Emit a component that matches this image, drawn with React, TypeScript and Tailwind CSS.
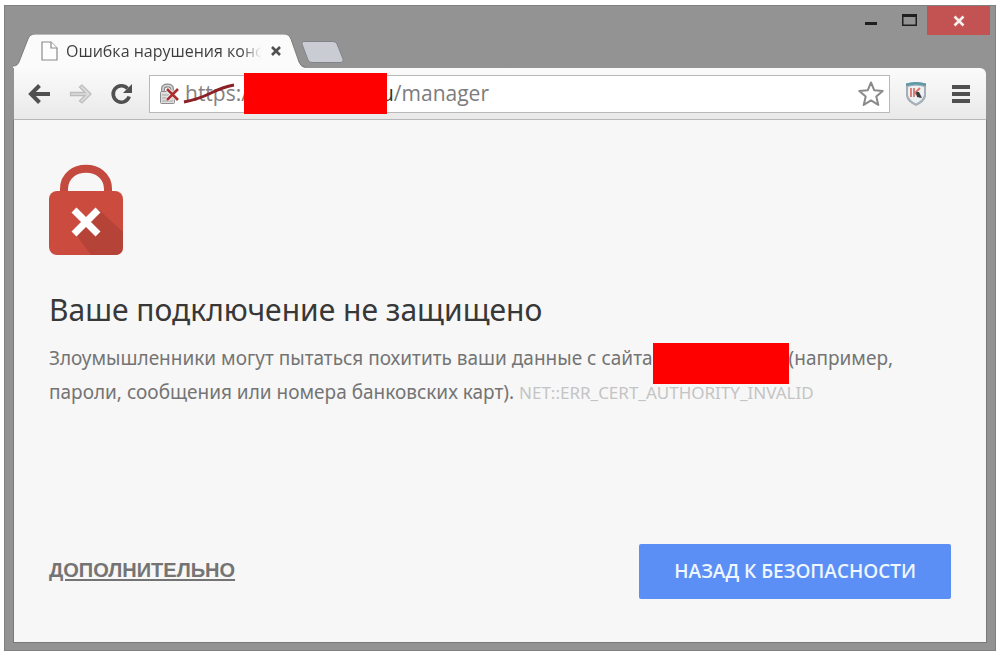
import React from 'react';

function PageIcon() {
  return (
    <svg className="shrink-0" width="17" height="20" viewBox="0 0 17 20" fill="#fdfdfd" stroke="#8c8c8c" strokeWidth="1.2">
      <path d="M1 1H10L16 7V19H1Z" />
      <path d="M10 1V7H16" />
    </svg>
  );
}

function Tab() {
  return (
    <div className="relative flex h-[34px] w-[292px] items-center pl-7">
      <svg className="absolute inset-0" width="292" height="34" viewBox="0 0 292 34" fill="none">
        <path d="M0 34V32C4 32 5 30 6 28L15 5Q17 0 22 0H271Q276 0 278 5L286 28Q288 33 292 34Z" fill="#fbfbfb" />
        <path d="M0 32C4 32 5 30 6 28L15 5Q17 0 22 0H271Q276 0 278 5L286 28Q288 33 292 33" stroke="#7d7d7d" />
      </svg>
      <div className="relative flex items-center">
        <PageIcon />
        <span className="ml-2 w-[195px] overflow-hidden whitespace-nowrap bg-linear-to-r from-[#3c3c3c] from-90% to-transparent bg-clip-text text-base text-transparent">
          Ошибка нарушения конф
        </span>
        <button type="button" aria-label="Закрыть вкладку" className="ml-[9px]">
          <svg width="12" height="12" viewBox="0 0 12 12" stroke="#505050" strokeWidth="2.6">
            <path d="M2 2L10 10M10 2L2 10" />
          </svg>
        </button>
      </div>
    </div>
  );
}

function TitleBar() {
  return (
    <header className="flex items-start justify-between">
      <div className="flex items-start pt-7 pl-2">
        <Tab />
        <button type="button" aria-label="Новая вкладка" className="mt-[7px] -ml-1">
          <svg width="43" height="22" viewBox="0 0 43 22">
            <path d="M3 .5H32Q35 .5 36 3L42 18Q43 21 40 21.500H11Q8 21.500 7 19L1 3Q0 .5 3 .5Z" fill="#c9ccd3" stroke="#81848a" />
          </svg>
        </button>
      </div>
      <div className="flex pr-[5px]">
        <button type="button" aria-label="Свернуть" className="flex h-7 w-10 items-center justify-center">
          <svg width="12" height="12" viewBox="0 0 12 12" fill="#1f1f1f"><path d="M0 8H12V11H0Z" /></svg>
        </button>
        <button type="button" aria-label="Развернуть" className="flex h-7 w-9 items-center justify-center">
          <svg width="15" height="12" viewBox="0 0 15 12" fill="none" stroke="#1f1f1f">
            <path d="M.75 1V11.250H14.250V1" strokeWidth="1.5" />
            <path d="M0 1.500H15" strokeWidth="3" />
          </svg>
        </button>
        <button type="button" aria-label="Закрыть" className="flex h-[29px] w-[63px] items-center justify-center bg-[#c35352]">
          <svg width="12" height="12" viewBox="0 0 12 12" stroke="#f7eeee" strokeWidth="2.600">
            <path d="M1.500 1.500L10.500 10.500M10.500 1.500L1.500 10.500" />
          </svg>
        </button>
      </div>
    </header>
  );
}

function BackIcon() {
  return (
    <svg width="24" height="20" viewBox="0 0 24 20" fill="none" stroke="currentColor" strokeWidth="4">
      <path d="M3 10H22M11.500 1.500L3 10L11.500 18.500" />
    </svg>
  );
}

function ForwardIcon() {
  return (
    <svg width="24" height="20" viewBox="0 0 24 20" fill="#dcdcdc" stroke="#bcbcbc" strokeWidth="1.300">
      <path d="M1.500 8.500H16L10.500 3L13 1L22 10L13 19L10.500 17L16 11.500H1.500Z" />
    </svg>
  );
}

function ReloadIcon() {
  return (
    <svg width="24" height="22" viewBox="0 0 24 22">
      <path d="M17.500 5.500A8.200 8.200 0 1 0 19.200 13.500" fill="none" stroke="#505050" strokeWidth="3.600" />
      <path d="M22 1V10H13Z" fill="#505050" />
    </svg>
  );
}

function BrokenLockIcon() {
  return (
    <svg className="shrink-0" width="20" height="22" viewBox="0 0 20 22" fill="none">
      <path d="M4 9V6Q4 2.500 8.500 2.500Q13 2.500 13 6V9" stroke="#8d8d8d" strokeWidth="4" />
      <path d="M4 9V6Q4 2.500 8.500 2.500Q13 2.500 13 6V9" stroke="#d9d9d9" strokeWidth="1.500" />
      <rect x="1.500" y="8.500" width="14" height="12" rx="1" fill="#dedede" stroke="#8d8d8d" />
      <path d="M3 12H14M3 15H14M3 18H14" stroke="#a5a5a5" />
      <path d="M8 6L19 17M19 6L8 17" stroke="#fff" strokeWidth="4" />
      <path d="M8 6L19 17M19 6L8 17" stroke="#a82f2f" strokeWidth="2.600" />
    </svg>
  );
}

function ShieldIcon() {
  return (
    <svg width="22" height="26" viewBox="0 0 22 26">
      <path d="M1 2.500Q11 -.5 21 2.500V15Q20 21 11 25Q2 21 1 15Z" fill="#a4afb7" />
      <path d="M1 2.500Q11 -.5 21 2.500V5Q11 2 1 5Z" fill="#5d9aa8" />
      <path d="M3 6Q11 3.500 19 6V14Q18 19 11 22.500Q4 19 3 14Z" fill="#edf0f2" />
      <path d="M6 7V16M9 7V16" stroke="#d9786d" strokeWidth="1.800" />
      <path d="M15 7L10 12L15 16" fill="none" stroke="#d9786d" strokeWidth="2" />
      <path d="M11 11H14L17 17L12 16Z" fill="#363c40" />
    </svg>
  );
}

function Toolbar() {
  return (
    <div className="mx-[9px] flex h-[52px] items-center rounded-tr-md border-b border-[#b7b7b7] bg-linear-to-b from-[#fbfbfb] to-[#e9e9e9] pr-[15px] pl-[14px]">
      <div className="flex gap-[17px]">
        <button type="button" aria-label="Назад" className="text-[#505050]"><BackIcon /></button>
        <button type="button" aria-label="Вперёд"><ForwardIcon /></button>
        <button type="button" aria-label="Обновить"><ReloadIcon /></button>
      </div>
      <div className="ml-[15px] flex h-[38px] min-w-0 flex-1 items-center border border-[#b9b9b9] bg-white pr-1 pl-[9px] text-[21px] text-[#7c7c7c]">
        <BrokenLockIcon />
        <span className="relative ml-1.5 text-[#887f7f]">
          https
          <svg className="absolute top-1 -left-1 h-6 w-14" viewBox="0 0 56 24" fill="none">
            <path d="M3 20Q18 17 30 11T53 3" stroke="#8b2026" strokeWidth="3" />
          </svg>
        </span>
        <span>:/</span>
        <span className="relative -mr-1.5 -ml-[5px] h-[41px] w-[143px] shrink-0 bg-[#ff0000]" />
        <span className="text-[#333]">u</span>
        <input aria-label="Адрес" defaultValue="/manager" className="min-w-0 flex-1 bg-transparent outline-none" />
        <button type="button" aria-label="Добавить в закладки">
          <svg width="28" height="28" viewBox="0 0 28 28" fill="#fff" stroke="#8a8a8a" strokeWidth="2" strokeLinejoin="round">
            <path d="M14 2.500L17.300 10.300L25.700 11L19.300 16.600L21.300 24.900L14 20.400L6.700 24.900L8.700 16.600L2.300 11L10.700 10.300Z" />
          </svg>
        </button>
      </div>
      <button type="button" aria-label="Защита" className="ml-[15px]"><ShieldIcon /></button>
      <button type="button" aria-label="Меню" className="ml-6">
        <svg width="20" height="20" viewBox="0 0 20 20" fill="#505050">
          <path d="M1 1H19V5H1ZM1 8H19V12H1ZM1 15H19V19H1Z" />
        </svg>
      </button>
    </div>
  );
}

function LockIcon() {
  return (
    <svg width="74" height="92" viewBox="0 0 74 92" fill="none">
      <path d="M15 30V25C15 -2 59 -2 59 25V30" stroke="#c4493f" strokeWidth="8" />
      <rect x="0" y="27" width="74" height="64" rx="8" fill="#cb4b3f" />
      <path d="M50 46L74 68V83Q74 91 66 91H42L26 69Z" fill="#b54338" />
      <path d="M25 46L49 70M49 46L25 70" stroke="#fff" strokeWidth="7" />
    </svg>
  );
}

export default function App() {
  return (
    <div className="min-h-screen bg-white pt-[5px] pr-1 pb-1 pl-1 font-['Open_Sans','Noto_Sans',sans-serif]">
      <div className="border border-[#808080] bg-[#939393] pb-[7px]">
        <TitleBar />
        <Toolbar />
        <main className="mx-2 border-x border-b border-[#7a7a7a] bg-[#f7f7f7] px-[35px] pt-11 pb-[43px]">
          <LockIcon />
          <h1 className="mt-8 font-['Noto_Sans',sans-serif] text-[30px] leading-[44px] text-[#383838]">Ваше подключение не защищено</h1>
          <p className="mt-[9px] font-['Noto_Sans',sans-serif] text-[19px] leading-[34px] text-[#747474]">
            Злоумышленники могут пытаться похитить ваши данные с сайта
            <span className="-mt-2 -mb-4 inline-block h-[41px] w-[136px] bg-[#ff0000] align-middle" />
            (например, пароли, сообщения или номера банковских карт).{' '}
            <span className="text-[17px] leading-[34px] text-[#c4c4c4]">NET::ERR_CERT_AUTHORITY_INVALID</span>
          </p>
          <div className="mt-[134px] flex items-center justify-between">
            <a href="#details" className="pb-1 font-['Liberation_Sans',sans-serif] text-xl font-bold text-[#747474] underline underline-offset-2">
              ДОПОЛНИТЕЛЬНО
            </a>
            <button type="button" className="h-[55px] rounded-xs bg-[#5c8ff5] px-[35px] text-[19px] font-semibold text-[#eef6ff]">
              НАЗАД К БЕЗОПАСНОСТИ
            </button>
          </div>
        </main>
      </div>
    </div>
  );
}
